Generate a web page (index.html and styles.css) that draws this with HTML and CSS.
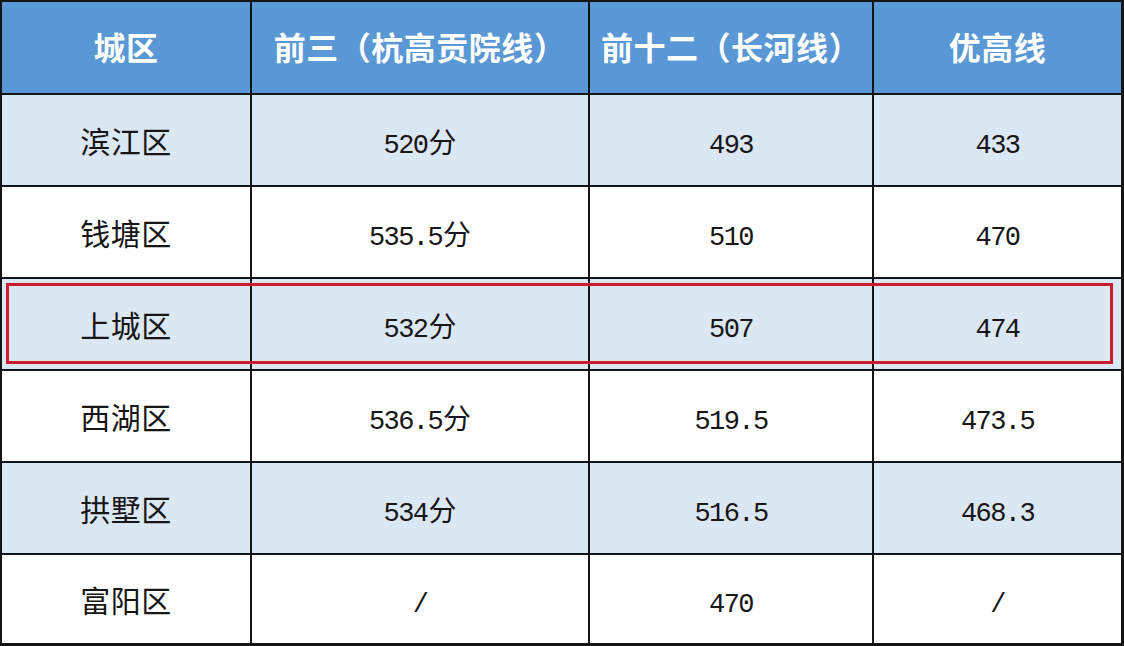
FILE: index.html
```html
<!DOCTYPE html>
<html lang="zh-CN">
<head>
<meta charset="utf-8">
<title>杭州各城区分数线</title>
<link rel="stylesheet" href="styles.css">
</head>
<body>
<div class="wrap">
  <table class="score">
    <colgroup>
      <col class="c1"><col class="c2"><col class="c3"><col class="c4">
    </colgroup>
    <thead>
      <tr>
        <th>城区</th>
        <th>前三（杭高贡院线）</th>
        <th>前十二（长河线）</th>
        <th>优高线</th>
      </tr>
    </thead>
    <tbody>
      <tr class="alt">
        <td class="name">滨江区</td>
        <td><span class="num">520</span><span class="unit">分</span></td>
        <td><span class="num">493</span></td>
        <td><span class="num">433</span></td>
      </tr>
      <tr>
        <td class="name">钱塘区</td>
        <td><span class="num">535.5</span><span class="unit">分</span></td>
        <td><span class="num">510</span></td>
        <td><span class="num">470</span></td>
      </tr>
      <tr class="alt">
        <td class="name">上城区</td>
        <td><span class="num">532</span><span class="unit">分</span></td>
        <td><span class="num">507</span></td>
        <td><span class="num">474</span></td>
      </tr>
      <tr>
        <td class="name">西湖区</td>
        <td><span class="num">536.5</span><span class="unit">分</span></td>
        <td><span class="num">519.5</span></td>
        <td><span class="num">473.5</span></td>
      </tr>
      <tr class="alt">
        <td class="name">拱墅区</td>
        <td><span class="num">534</span><span class="unit">分</span></td>
        <td><span class="num">516.5</span></td>
        <td><span class="num">468.3</span></td>
      </tr>
      <tr class="last">
        <td class="name">富阳区</td>
        <td><span class="num">/</span></td>
        <td><span class="num">470</span></td>
        <td><span class="num">/</span></td>
      </tr>
    </tbody>
  </table>
  <div class="highlight"></div>
</div>
</body>
</html>
```

FILE: styles.css
```css
html, body {
  margin: 0;
  padding: 0;
  background: #141414;
}

.wrap {
  position: relative;
  width: 1124px;
  height: 646px;
  overflow: hidden;
}

.score {
  border-collapse: collapse;
  table-layout: fixed;
  width: 1121px;
  background: #ffffff;
  font-family: "Noto Sans CJK SC", "Noto Sans", sans-serif;
  color: #161616;
}

.c1 { width: 250px; }
.c2 { width: 338px; }
.c3 { width: 284px; }
.c4 { width: 249px; }

.score th,
.score td {
  border: 2px solid #141414;
  padding: 0;
  text-align: center;
  vertical-align: middle;
}

.score thead tr { height: 93px; }
.score tbody tr { height: 92px; }
.score tbody tr.last { height: 90px; }

.score th {
  background: #5998d5;
  color: #ffffff;
  font-weight: 700;
  font-size: 32px;
  letter-spacing: 0.5px;
  padding-bottom: 4px;
}

.score tr.alt td { background: #dce7f4; }

.score td {
  font-size: 30px;
  font-weight: 400;
}

.score td.name {
  letter-spacing: 0.5px;
}

.num {
  font-family: "Liberation Mono", "DejaVu Sans Mono", monospace;
  font-size: 27px;
  letter-spacing: -1.6px;
}

.unit {
  font-family: "Noto Sans CJK SC", sans-serif;
  font-size: 28px;
  margin-left: 1px;
}

.highlight {
  position: absolute;
  left: 6px;
  top: 283px;
  width: 1101px;
  height: 75px;
  border: 3px solid #c81e2c;
  pointer-events: none;
}
```
